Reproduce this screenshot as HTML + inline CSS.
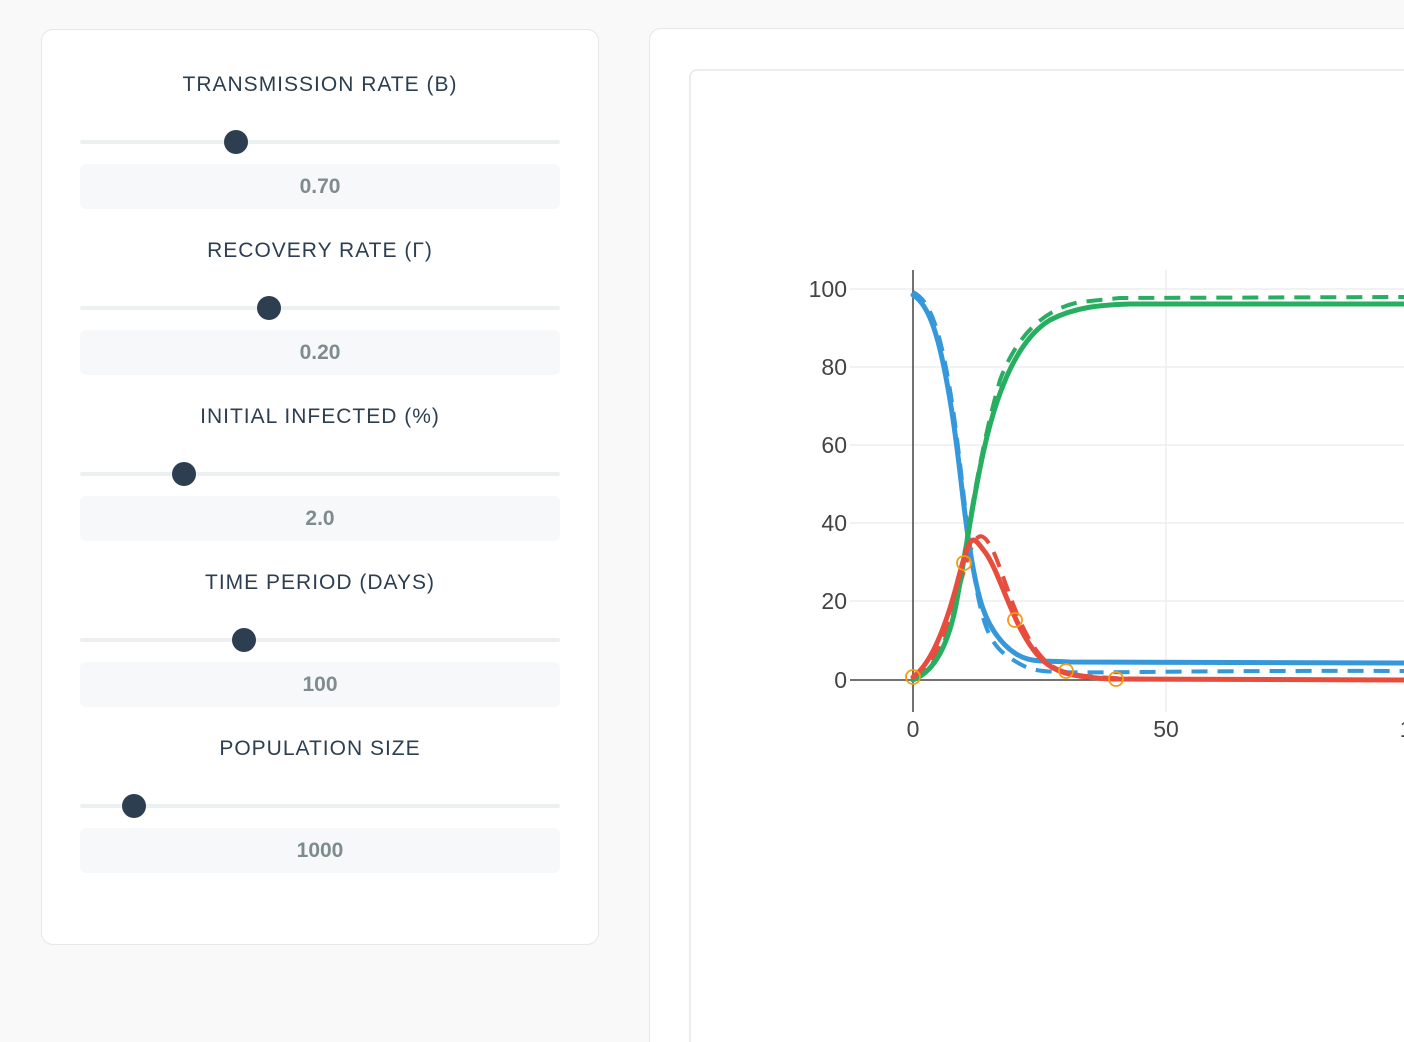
<!DOCTYPE html>
<html><head><meta charset="utf-8"><style>
html,body{margin:0;width:1404px;height:1042px;overflow:hidden}
body{background:#f9f9f9;font-family:"Liberation Sans",sans-serif;position:relative}
#wrap{position:absolute;left:0;top:0;width:1404px;height:1042px;overflow:hidden}
.panel{position:absolute;left:41px;top:29px;width:558px;height:916px;background:#fff;border:1px solid #e6e7eb;border-radius:12px;box-sizing:border-box}
.lab{position:absolute;left:80px;width:480px;text-align:center;font-size:21px;letter-spacing:1px;color:#2c3e50}
.track{position:absolute;left:80px;width:480px;height:4px;background:#ecf0f1;border-radius:2px}
.thumb{position:absolute;width:24px;height:24px;border-radius:50%;background:#2c3e50}
.val{position:absolute;left:80px;width:480px;height:45px;background:#f7f8fa;border-radius:6px;text-align:center;line-height:45px;font-size:21px;font-weight:bold;color:#7f8c8d}
.rp{position:absolute;left:649px;top:28px;width:800px;height:1040px;background:#fff;border:1px solid #e6e7eb;border-radius:12px;box-sizing:border-box}
.inner{position:absolute;left:689px;top:69px;width:800px;height:1000px;background:#fff;border:2px solid #ececf0;border-radius:8px;box-sizing:border-box}
</style></head><body><div id="wrap">
<div class="panel"></div>
<div class="lab" style="top:73px">TRANSMISSION RATE (Β)</div>
<div class="track" style="top:140px"></div><div class="thumb" style="left:224px;top:130px"></div>
<div class="val" style="top:164px">0.70</div>
<div class="lab" style="top:239px">RECOVERY RATE (Γ)</div>
<div class="track" style="top:306px"></div><div class="thumb" style="left:257px;top:296px"></div>
<div class="val" style="top:330px">0.20</div>
<div class="lab" style="top:405px">INITIAL INFECTED (%)</div>
<div class="track" style="top:472px"></div><div class="thumb" style="left:172px;top:462px"></div>
<div class="val" style="top:496px">2.0</div>
<div class="lab" style="top:571px">TIME PERIOD (DAYS)</div>
<div class="track" style="top:638px"></div><div class="thumb" style="left:232px;top:628px"></div>
<div class="val" style="top:662px">100</div>
<div class="lab" style="top:737px">POPULATION SIZE</div>
<div class="track" style="top:804px"></div><div class="thumb" style="left:122px;top:794px"></div>
<div class="val" style="top:828px">1000</div>
<div class="rp"></div>
<div class="inner"></div>
<svg style="position:absolute;left:0;top:0" width="1404" height="1042" font-family="Liberation Sans,sans-serif">
<g stroke="#eeeeee" stroke-width="1.5">
<line x1="850" y1="289" x2="1404" y2="289"/><line x1="850" y1="367" x2="1404" y2="367"/><line x1="850" y1="445" x2="1404" y2="445"/><line x1="850" y1="523" x2="1404" y2="523"/><line x1="850" y1="601" x2="1404" y2="601"/>
<line x1="1166" y1="270" x2="1166" y2="712"/>
</g>
<line x1="850" y1="680" x2="1404" y2="680" stroke="#444" stroke-width="1.5"/>
<line x1="913" y1="270" x2="913" y2="712" stroke="#444" stroke-width="1.5"/>
<g font-size="23" fill="#444" text-anchor="end">
<text x="847" y="297">100</text><text x="847" y="375">80</text><text x="847" y="453">60</text><text x="847" y="531">40</text><text x="847" y="609">20</text><text x="847" y="688">0</text>
</g>
<g font-size="23" fill="#444" text-anchor="middle"><text x="913" y="737">0</text><text x="1166" y="737">50</text><text x="1406" y="737">1</text></g>
<g fill="none" stroke-width="4" stroke-linecap="butt" stroke-linejoin="round">
<path stroke="#3498db" stroke-dasharray="16,10" d="M913,292 C930,300 940,330 950,390 S965,520 975,580 S995,650 1020,664 S1060,670 1404,671"/>
<path stroke="#27ae60" stroke-dasharray="16,10" d="M913,680 C935,670 950,640 960,580 S980,450 1000,380 C1015,340 1040,310 1080,302 L1120,298 L1404,297"/>
<path stroke="#e74c3c" stroke-dasharray="16,10" d="M913,678 C935,665 948,630 960,585 S978,525 990,545 S1015,625 1040,655 S1090,678 1404,680"/>
</g>
<g fill="none" stroke-width="5" stroke-linecap="round" stroke-linejoin="round">
<path stroke="#3498db" d="M913,295 C930,305 940,340 950,400 S962,500 970,550 S985,625 1005,645 S1040,660 1070,662 L1404,663"/>
<path stroke="#27ae60" d="M913,680 C930,673 945,655 955,610 C965,560 975,480 990,425 C1005,370 1025,335 1050,320 C1075,307 1100,305 1130,304 L1404,304"/>
<path stroke="#e74c3c" d="M913,677 C930,665 945,630 958,580 S972,535 985,552 S1010,615 1030,645 S1070,676 1110,679 L1404,680"/>
</g>
<g fill="none" stroke="#f39c12" stroke-width="1.8">
<circle cx="913" cy="677" r="7"/><circle cx="964" cy="563" r="7"/><circle cx="1015" cy="620" r="7"/><circle cx="1066" cy="671" r="7"/><circle cx="1116" cy="679" r="7"/>
</g>
</svg>
</div></body></html>
